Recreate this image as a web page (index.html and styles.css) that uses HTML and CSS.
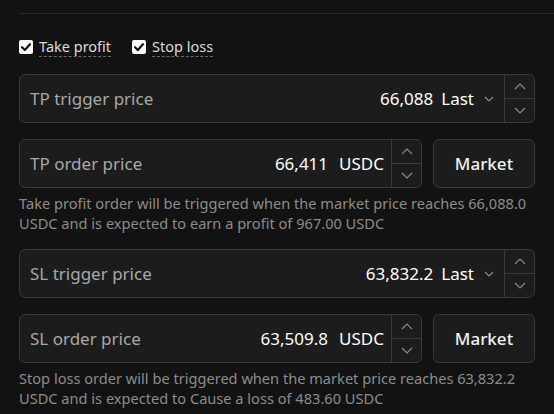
FILE: index.html
```html
<!DOCTYPE html>
<html>
<head>
<meta charset="utf-8">
<link rel="stylesheet" href="styles.css">
</head>
<body>
<div class="panel">
  <div class="divider"></div>
  <div class="checks">
    <label class="check">
      <span class="box"><svg viewBox="0 0 14 14" width="14" height="14"><path d="M3 7.2 L5.8 10 L11 4.2" fill="none" stroke="#111" stroke-width="2.2" stroke-linecap="round" stroke-linejoin="round"/></svg></span>
      <span class="check-text">Take profit</span>
    </label>
    <label class="check">
      <span class="box"><svg viewBox="0 0 14 14" width="14" height="14"><path d="M3 7.2 L5.8 10 L11 4.2" fill="none" stroke="#111" stroke-width="2.2" stroke-linecap="round" stroke-linejoin="round"/></svg></span>
      <span class="check-text">Stop loss</span>
    </label>
  </div>

  <div class="field trigger">
    <div class="field-main">
      <span class="label">TP trigger price</span>
      <span class="value">66,088</span>
      <span class="unit">Last</span>
      <svg class="dd" viewBox="0 0 10 6" width="10" height="6"><path d="M1 1 L5 5 L9 1" fill="none" stroke="#8a8a8a" stroke-width="1.2"/></svg>
    </div>
    <div class="stepper">
      <div class="step"><svg viewBox="0 0 12 7" width="12" height="7"><path d="M1 6 L6 1 L11 6" fill="none" stroke="#8a8a8a" stroke-width="1.2"/></svg></div>
      <div class="step"><svg viewBox="0 0 12 7" width="12" height="7"><path d="M1 1 L6 6 L11 1" fill="none" stroke="#8a8a8a" stroke-width="1.2"/></svg></div>
    </div>
  </div>

  <div class="order-row">
    <div class="field order">
      <div class="field-main">
        <span class="label">TP order price</span>
        <span class="value">66,411</span>
        <span class="unit usdc">USDC</span>
      </div>
      <div class="stepper">
        <div class="step"><svg viewBox="0 0 12 7" width="12" height="7"><path d="M1 6 L6 1 L11 6" fill="none" stroke="#8a8a8a" stroke-width="1.2"/></svg></div>
        <div class="step"><svg viewBox="0 0 12 7" width="12" height="7"><path d="M1 1 L6 6 L11 1" fill="none" stroke="#8a8a8a" stroke-width="1.2"/></svg></div>
      </div>
    </div>
    <div class="market">Market</div>
  </div>
  <p class="help">Take profit order will be triggered when the market price reaches 66,088.0 USDC and is expected to earn a profit of 967.00 USDC</p>

  <div class="field trigger sl">
    <div class="field-main">
      <span class="label">SL trigger price</span>
      <span class="value">63,832.2</span>
      <span class="unit">Last</span>
      <svg class="dd" viewBox="0 0 10 6" width="10" height="6"><path d="M1 1 L5 5 L9 1" fill="none" stroke="#8a8a8a" stroke-width="1.2"/></svg>
    </div>
    <div class="stepper">
      <div class="step"><svg viewBox="0 0 12 7" width="12" height="7"><path d="M1 6 L6 1 L11 6" fill="none" stroke="#8a8a8a" stroke-width="1.2"/></svg></div>
      <div class="step"><svg viewBox="0 0 12 7" width="12" height="7"><path d="M1 1 L6 6 L11 1" fill="none" stroke="#8a8a8a" stroke-width="1.2"/></svg></div>
    </div>
  </div>

  <div class="order-row">
    <div class="field order">
      <div class="field-main">
        <span class="label">SL order price</span>
        <span class="value">63,509.8</span>
        <span class="unit usdc">USDC</span>
      </div>
      <div class="stepper">
        <div class="step"><svg viewBox="0 0 12 7" width="12" height="7"><path d="M1 6 L6 1 L11 6" fill="none" stroke="#8a8a8a" stroke-width="1.2"/></svg></div>
        <div class="step"><svg viewBox="0 0 12 7" width="12" height="7"><path d="M1 1 L6 6 L11 1" fill="none" stroke="#8a8a8a" stroke-width="1.2"/></svg></div>
      </div>
    </div>
    <div class="market">Market</div>
  </div>
  <p class="help">Stop loss order will be triggered when the market price reaches 63,832.2 USDC and is expected to Cause a loss of 483.60 USDC</p>
</div>
</body>
</html>
```

FILE: styles.css
```css
* { box-sizing: border-box; }
html, body { margin: 0; padding: 0; }
body {
  background: #121212;
  font-family: "Noto Sans", sans-serif;
  color: #e6e6e6;
  width: 554px;
  height: 414px;
  overflow: hidden;
}
.panel {
  padding-left: 19px;
  padding-top: 13px;
}
.divider {
  border-top: 1px solid #2b2b2b;
}
.checks {
  display: flex;
  gap: 21px;
  margin-top: 23px;
  height: 21px;
  align-items: flex-start;
}
.check {
  display: flex;
  align-items: flex-start;
  gap: 6px;
}
.box {
  width: 14px;
  height: 14px;
  background: #fff;
  border-radius: 2px;
  display: flex;
  margin-top: 3px;
}
.check-text {
  font-size: 14.5px;
  line-height: 19px;
  color: #dcdcdc;
  border-bottom: 1px dashed #6a6a6a;
}
.field {
  display: flex;
  height: 49px;
  border: 1px solid #393939;
  border-radius: 6px;
  background: #1c1c1c;
}
.trigger {
  width: 516px;
  margin-top: 16px;
}
.field-main {
  flex: 1;
  display: flex;
  align-items: center;
  padding-left: 10px;
  padding-right: 10px;
  font-size: 17px;
}
.order .field-main {
  padding-right: 7px;
}
.label {
  flex: 1;
  color: #a8a8a8;
}
.value {
  color: #ffffff;
}
.unit {
  color: #ffffff;
  margin-left: 8px;
}
.usdc {
  margin-left: 11px;
}
.dd {
  margin-left: 10px;
  margin-right: 0;
}
.stepper {
  width: 30px;
  display: flex;
  flex-direction: column;
  border-left: 1px solid #393939;
}
.step {
  flex: 1;
  display: flex;
  align-items: center;
  justify-content: center;
}
.step + .step {
  border-top: 1px solid #393939;
}
.order-row {
  display: flex;
  gap: 11px;
  margin-top: 16px;
  width: 516px;
}
.order {
  width: 403px;
}
.market {
  flex: 1;
  height: 49px;
  border: 1px solid #393939;
  border-radius: 6px;
  background: #1c1c1c;
  display: flex;
  align-items: center;
  justify-content: center;
  font-size: 17px;
  font-weight: 500;
  color: #f2f2f2;
}
.help {
  margin: 5px 0 0 0;
  font-size: 14.6px;
  line-height: 20px;
  color: #8c8c8c;
  width: 516px;
}
.sl {
  margin-top: 16px;
}
```
